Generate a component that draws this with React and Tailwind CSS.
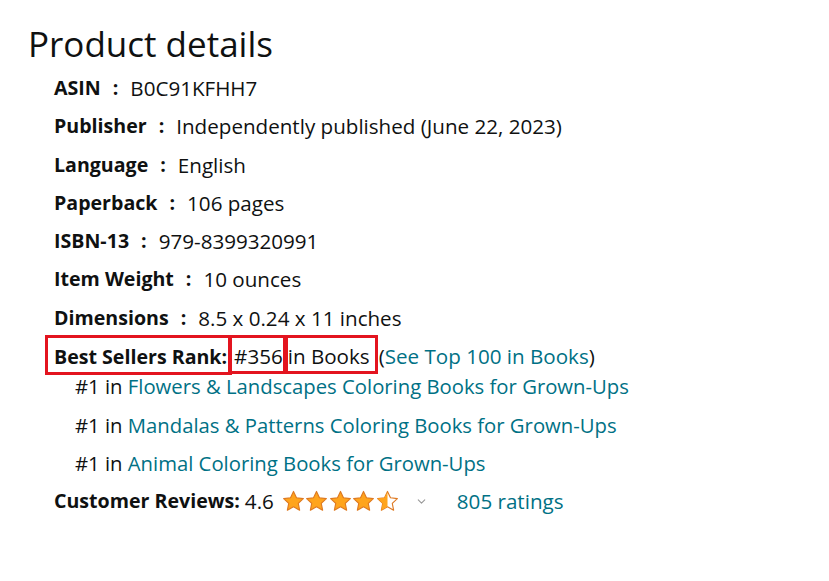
import React from "react";
import { ChevronDown } from "lucide-react";

const details = [
  ["ASIN", "B0C91KFHH7"],
  ["Publisher", "Independently published (June 22, 2023)"],
  ["Language", "English"],
  ["Paperback", "106 pages"],
  ["ISBN-13", "979-8399320991"],
  ["Item Weight", "10 ounces"],
  ["Dimensions", "8.5 x 0.24 x 11 inches"],
];

const subRanks = [
  "Flowers & Landscapes Coloring Books for Grown-Ups",
  "Mandalas & Patterns Coloring Books for Grown-Ups",
  "Animal Coloring Books for Grown-Ups",
];

const starPath =
  "M12 1.5l3.1 6.6 7.2.9-5.3 5 1.4 7.1L12 17.6l-6.4 3.5 1.4-7.1-5.3-5 7.2-.9z";

const Star = ({ half }) => (
  <svg width="23" height="22" viewBox="0 0 24 23">
    <defs>
      <clipPath id="halfclip">
        <rect x="0" y="0" width="12" height="23" />
      </clipPath>
    </defs>
    {half ? (
      <>
        <path d={starPath} fill="#fff" stroke="#de7921" strokeWidth="1.2" strokeLinejoin="round" />
        <path d={starPath} fill="#ffa41c" clipPath="url(#halfclip)" />
      </>
    ) : (
      <path d={starPath} fill="#ffa41c" stroke="#de7921" strokeWidth="1.2" strokeLinejoin="round" />
    )}
  </svg>
);

// red annotation frame laid over a piece of text
const Boxed = ({ children, inset }) => (
  <span className="relative inline-block leading-[24px]">
    {children}
    <span className={`absolute border-[3px] border-[#e3141f] pointer-events-none ${inset}`} />
  </span>
);

export default function App() {
  return (
    <div
      className="w-[829px] h-[581px] bg-white text-[#0f1111] pl-[28px] pt-[24px]"
      style={{ fontFamily: '"Open Sans", "Liberation Sans", sans-serif' }}
    >
      <h2 className="text-[35px] leading-[40px] font-normal">Product details</h2>

      <ul className="mt-[12px] pl-[26px] flex flex-col gap-[14.3px] text-[20.6px] leading-[24px]">
        {details.map(([label, value]) => (
          <li key={label} className="h-[24px] flex items-center whitespace-nowrap">
            <span className="font-bold text-[19.6px]">{label}</span>
            <span className="font-bold text-[19.6px] ml-[12px] mr-[12px]">:</span>
            <span>{value}</span>
          </li>
        ))}

        <li className="whitespace-nowrap">
          <div className="h-[24px] flex items-center">
            <Boxed inset="-top-[9px] -bottom-[6px] -left-[9px] -right-[5px]">
              <span className="font-bold text-[19.6px]">Best Sellers Rank:</span>
            </Boxed>
            <span className="w-[7px]" />
            <Boxed inset="-top-[9px] -bottom-[6px] -left-[6px] -right-[5px]">#356</Boxed>
            <span className="w-[5px]" />
            <Boxed inset="-top-[9px] -bottom-[6px] -left-[5px] -right-[8px]">in Books</Boxed>
            <span className="w-[9px]" />
            <span>
              (<span className="text-[#007185]">See Top 100 in Books</span>)
            </span>
          </div>
          <ul className="mt-[6px] pl-[21px] flex flex-col gap-[14.5px] text-[20.3px]">
            {subRanks.map((r) => (
              <li key={r} className="h-[24px] flex items-center">
                <span>
                  #1 in <span className="text-[#007185]">{r}</span>
                </span>
              </li>
            ))}
          </ul>
        </li>

        <li className="h-[24px] flex items-center whitespace-nowrap">
          <span className="font-bold text-[19.6px]">Customer Reviews:</span>
          <span className="ml-[5px]">4.6</span>
          <span className="ml-[8px] flex items-center gap-[0.5px]">
            {[0, 1, 2, 3].map((i) => (
              <Star key={i} />
            ))}
            <Star half />
          </span>
          <ChevronDown className="ml-[16px] text-[#999]" size={13} strokeWidth={2} />
          <span className="ml-[29px] text-[#007185]">805 ratings</span>
        </li>
      </ul>
    </div>
  );
}
